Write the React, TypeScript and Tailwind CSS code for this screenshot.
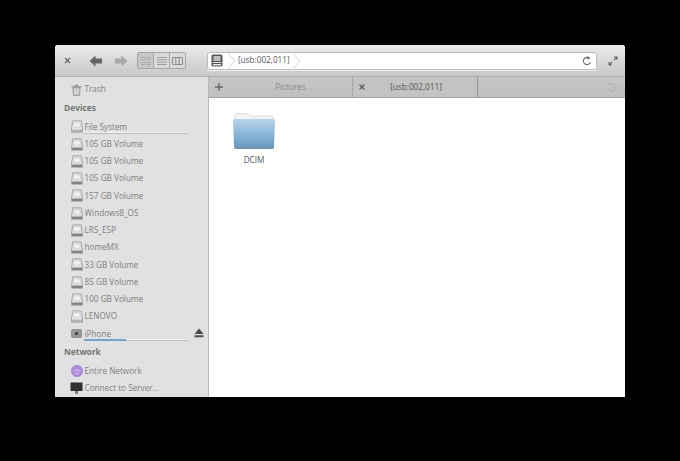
const font = { fontFamily: '"Open Sans", sans-serif' };

function Disk({ dim }: { dim?: boolean }) {
  return (
    <svg width="12" height="13" viewBox="0 0 12 13" className="shrink-0">
      <path d="M1.8 0.8 H10.2 L11.5 9 V12.3 H0.5 V9 Z" fill={dim ? "#e6e6e6" : "#dedede"} stroke="#9a9a9a" strokeWidth="0.8" />
      <ellipse cx="6" cy="5" rx="3.8" ry="2.6" fill="#efefef" stroke="#c4c4c4" strokeWidth="0.6" />
      <rect x="1" y="9.6" width="10" height="2.3" fill={dim ? "#b0b0b0" : "#808080"} />
    </svg>
  );
}

function Bar({ value }: { value?: boolean }) {
  return (
    <div className="absolute left-[29px] top-[14px] w-[104px] h-[2px] bg-[#f4f4f4] border-b border-[#bcbcbc]">
      {value && <div className="h-[2px] w-[42px] bg-[#6aa6d0]" />}
    </div>
  );
}

function Row({ label, icon, bar, barValue, eject }: { label: string; icon: React.ReactNode; bar?: boolean; barValue?: boolean; eject?: boolean }) {
  return (
    <div className="relative h-[17.25px] flex items-center pl-[15px] gap-[1.5px] text-[8.2px] text-[#808080] whitespace-nowrap">
      <span className="w-[13px] flex justify-center">{icon}</span>
      <span className="truncate">{label}</span>
      {bar && <Bar value={barValue} />}
      {eject && (
        <svg width="10" height="10" viewBox="0 0 10 10" className="absolute left-[139px] top-[3px]">
          <path d="M5 0.5 L9.5 6 H0.5 Z M0.5 7.2 H9.5 V9.2 H0.5 Z" fill="#4a4a4a" />
        </svg>
      )}
    </div>
  );
}

const volumes = ["105 GB Volume", "105 GB Volume", "105 GB Volume", "157 GB Volume", "Windows8_OS", "LRS_ESP", "homeMX", "33 GB Volume", "85 GB Volume", "100 GB Volume", "LENOVO"];

function Heading({ label }: { label: string }) {
  return <div className="h-[20px] flex items-center pl-[9px] text-[8.4px] font-bold text-[#747474]">{label}</div>;
}

export default function App() {
  return (
    <div className="w-[680px] h-[461px] bg-black pt-[45px] pl-[55px] overflow-hidden" style={font}>
      <div className="w-[570px] h-[352px] bg-white rounded-t-[3px] overflow-hidden flex flex-col">
        {/* Toolbar */}
        <div className="h-[32px] shrink-0 flex items-center bg-gradient-to-b from-[#ebebeb] to-[#c8c8c8] border-b border-[#acacac]">
          <svg width="7" height="7" viewBox="0 0 7 7" className="ml-[9px]">
            <path d="M1 1 L6 6 M6 1 L1 6" stroke="#666" strokeWidth="1.2" />
          </svg>
          <svg width="14" height="12" viewBox="0 0 14 12" className="ml-[18px]">
            <path d="M0.5 6 L6.5 0.5 V3.5 H13 V8.5 H6.5 V11.5 Z" fill="#666666" />
          </svg>
          <svg width="14" height="12" viewBox="0 0 14 12" className="ml-[11px]">
            <path d="M13.5 6 L7.5 0.5 V3.5 H1 V8.5 H7.5 V11.5 Z" fill="#a8a8a8" />
          </svg>
          <div className="ml-[9px] w-[49px] h-[17px] flex border border-[#a6a6a6] rounded-[2px] bg-[#dadada]">
            <div className="w-[16px] flex items-center justify-center bg-[#c6c6c6] border-r border-[#a8a8a8]">
              <svg width="10" height="8" viewBox="0 0 10 8">
                <path d="M1 0.5 H4 V2.5 H1 Z M6 0.5 H9 V2.5 H6 Z M1 5.5 H4 V7.5 H1 Z M6 5.5 H9 V7.5 H6 Z" fill="#e6e6e6" stroke="#8a8a8a" strokeWidth="0.6" />
              </svg>
            </div>
            <div className="w-[16px] flex items-center justify-center border-r border-[#a8a8a8]">
              <svg width="10" height="8" viewBox="0 0 10 8">
                <path d="M0 0.5 H10 M0 2.8 H10 M0 5.2 H10 M0 7.5 H10" stroke="#8a8a8a" strokeWidth="0.8" />
              </svg>
            </div>
            <div className="flex-1 flex items-center justify-center">
              <svg width="11" height="8" viewBox="0 0 11 8">
                <path d="M0.5 0.5 H10.5 V7.5 H0.5 Z M3.8 0.5 V7.5 M7.2 0.5 V7.5" fill="none" stroke="#7a7a7a" strokeWidth="0.8" />
              </svg>
            </div>
          </div>
          {/* Location bar */}
          <div className="relative ml-[21px] w-[390px] h-[18px] flex items-center bg-white border border-[#bcbcbc] rounded-[3px] shadow-[0_1px_0_#efefef]">
            <svg width="12" height="13" viewBox="0 0 12 13" className="ml-[3px] shrink-0">
              <rect x="0.5" y="0.5" width="11" height="12" rx="1.5" fill="#555555" />
              <rect x="2.5" y="2" width="7" height="5" fill="#bdbdbd" />
              <rect x="1.5" y="8" width="9" height="1" fill="#dddddd" />
              <rect x="2" y="10" width="8" height="1.5" fill="#e8e8e8" />
            </svg>
            <svg width="10" height="18" viewBox="0 0 10 18" className="ml-[3px] shrink-0">
              <path d="M1 0 L9 9 L1 18" fill="none" stroke="#d2d2d2" strokeWidth="1" />
            </svg>
            <span className="ml-[2px] text-[8.2px] text-[#555555] whitespace-nowrap">[usb:002,011]</span>
            <svg width="10" height="18" viewBox="0 0 10 18" className="ml-[1px] shrink-0">
              <path d="M1 0 L9 9 L1 18" fill="none" stroke="#d2d2d2" strokeWidth="1" />
            </svg>
            <svg width="10" height="10" viewBox="0 0 10 10" className="ml-auto mr-[4px]">
              <path d="M8.4 6.2 A3.6 3.6 0 1 1 6.6 1.8" fill="none" stroke="#6e6e6e" strokeWidth="1.1" />
              <path d="M5.5 0 L8.5 2 L5.5 4 Z" fill="#6e6e6e" />
            </svg>
          </div>
          <svg width="10" height="10" viewBox="0 0 10 10" className="ml-[11px]">
            <path d="M9.5 0.5 H5.8 L9.5 4.2 Z M0.5 9.5 H4.2 L0.5 5.8 Z" fill="#5c5c5c" />
            <path d="M7.5 2.5 L6 4 M2.5 7.5 L4 6" stroke="#5c5c5c" strokeWidth="1.1" />
          </svg>
        </div>
        <div className="flex-1 flex min-h-0">
          {/* Sidebar */}
          <div className="w-[154px] shrink-0 bg-[#e1e1e1] border-r border-[#b8b8b8] overflow-hidden pt-[4px]">
            <Row
              label="Trash"
              icon={
                <svg width="11" height="12" viewBox="0 0 11 12">
                  <path d="M0.5 1.8 H10.5 V3.6 H0.5 Z" fill="#a3a3a3" />
                  <path d="M4 0.7 H7 V2 H4 Z" fill="#8a8a8a" />
                  <path d="M1.8 3.6 H9.2 L8.6 11.5 H2.4 Z" fill="#c2c2c2" stroke="#8e8e8e" strokeWidth="0.7" />
                  <path d="M4.2 5 V10 M6.8 5 V10" stroke="#f0f0f0" strokeWidth="0.9" />
                </svg>
              }
            />
            <Heading label="Devices" />
            <Row label="File System" icon={<Disk dim />} bar />
            {volumes.map((v, i) => (
              <Row key={i} label={v} icon={<Disk dim={v === "LENOVO"} />} />
            ))}
            <Row
              label="iPhone"
              icon={
                <svg width="11" height="9" viewBox="0 0 11 9">
                  <rect x="0.5" y="0.5" width="10" height="8" rx="1" fill="#979797" stroke="#7c7c7c" strokeWidth="0.6" />
                  <circle cx="5.5" cy="4.5" r="1.6" fill="#3a3a3a" />
                </svg>
              }
              bar
              barValue
              eject
            />
            <Heading label="Network" />
            <Row
              label="Entire Network"
              icon={
                <svg width="12" height="12" viewBox="0 0 12 12">
                  <circle cx="6" cy="6" r="5.7" fill="#b08ddc" stroke="#8f68c6" strokeWidth="0.5" />
                  <path d="M3 6.5 Q6 3 9 6.5 M4.5 9 Q6 7 7.5 9" fill="none" stroke="#e6d8f5" strokeWidth="0.9" />
                </svg>
              }
            />
            <Row
              label="Connect to Server..."
              icon={
                <svg width="13" height="12" viewBox="0 0 13 12">
                  <rect x="0.5" y="0.5" width="12" height="8.5" fill="#2f2f2f" />
                  <rect x="5" y="9" width="3" height="3" fill="#808080" />
                </svg>
              }
            />
          </div>
          {/* Content */}
          <div className="flex-1 flex flex-col min-w-0">
            <div className="h-[21px] shrink-0 flex items-stretch bg-gradient-to-b from-[#c7c7c7] to-[#bfbfbf] border-b border-[#a2a2a2] text-[8.2px]">
              <div className="w-[20px] flex items-center justify-center">
                <svg width="8" height="8" viewBox="0 0 8 8">
                  <path d="M4 0 V8 M0 4 H8" stroke="#666" strokeWidth="1.3" />
                </svg>
              </div>
              <div className="w-[124px] flex items-center justify-center text-[#858585] border-r border-[#a4a4a4]">Pictures</div>
              <div className="relative w-[125px] flex items-center justify-center pl-[2px] text-[#555555] bg-[#c3c3c3] border-r border-[#929292]">
                <svg width="6" height="6" viewBox="0 0 6 6" className="absolute left-[6px] top-[7px]">
                  <path d="M0.5 0.5 L5.5 5.5 M5.5 0.5 L0.5 5.5" stroke="#5c5c5c" strokeWidth="1.3" />
                </svg>
                [usb:002,011]
              </div>
              <div className="ml-auto mr-[8px] flex items-center">
                <svg width="11" height="11" viewBox="0 0 11 11">
                  <path d="M2.2 3 A4.2 4.2 0 1 1 1.5 6" fill="none" stroke="#aeaeae" strokeWidth="0.9" />
                  <path d="M0.3 3.3 H3.2 V0.6 Z" fill="#aeaeae" />
                  <path d="M5.5 3 V5.7 L7.5 6.7" fill="none" stroke="#aeaeae" strokeWidth="0.8" />
                </svg>
              </div>
            </div>
            <div className="flex-1 bg-white pl-[24px] pt-[15px]">
              <div className="w-[42px] flex flex-col items-center">
                <svg width="42" height="36" viewBox="0 0 42 36">
                  <defs>
                    <linearGradient id="folderBody" x1="0" y1="0" x2="0" y2="1">
                      <stop offset="0" stopColor="#b9d4e9" />
                      <stop offset="1" stopColor="#6198c5" />
                    </linearGradient>
                  </defs>
                  <path d="M3 0.5 H15 L17 3 H38 Q40 3 40 5 V12 H2 V1.5 Q2 0.5 3 0.5 Z" fill="#f3f3f3" stroke="#d6d6d6" strokeWidth="0.7" />
                  <path d="M1 6 H41 Q42 6 42 8 L41 33.5 Q41 35.5 39 35.5 H3 Q1 35.5 1 33.5 L0 8 Q0 6 1 6 Z" fill="url(#folderBody)" />
                  <rect x="1.5" y="34.5" width="39" height="1.5" fill="#7f929f" />
                </svg>
                <div className="mt-[5px] text-[8.2px] text-[#555555]">DCIM</div>
              </div>
            </div>
          </div>
        </div>
      </div>
    </div>
  );
}
